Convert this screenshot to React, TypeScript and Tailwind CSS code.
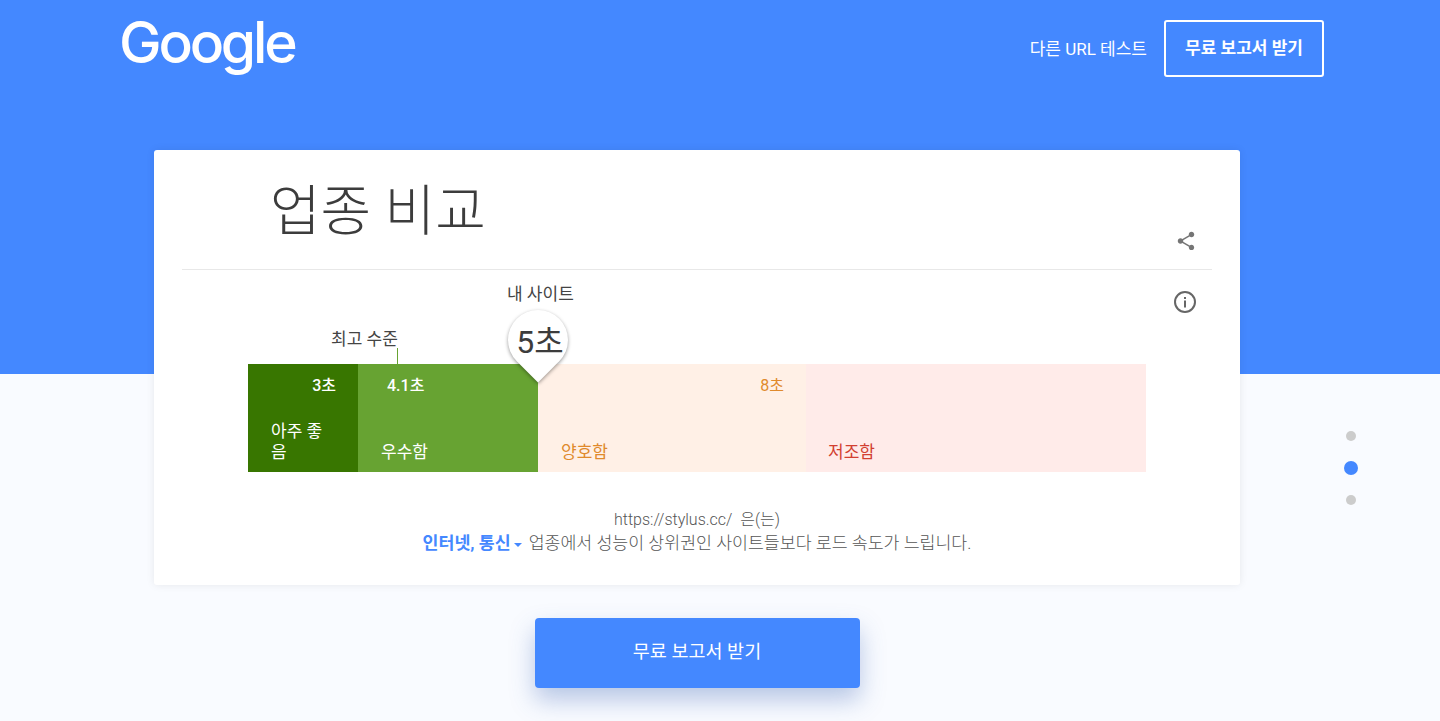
const font = "font-['Roboto','Noto_Sans_CJK_KR',sans-serif]";

function ShareIcon() {
  return (
    <svg viewBox="0 0 24 24" className="h-[22px] w-[22px] fill-[#757575]">
      <path d="M18 16.08c-.76 0-1.44.3-1.96.77L8.91 12.7c.05-.23.09-.46.09-.7s-.04-.47-.09-.7l7.05-4.11c.54.5 1.25.81 2.04.81 1.66 0 3-1.34 3-3s-1.34-3-3-3-3 1.34-3 3c0 .24.04.47.09.7L8.04 9.81C7.5 9.31 6.79 9 6 9c-1.66 0-3 1.34-3 3s1.34 3 3 3c.79 0 1.5-.31 2.04-.81l7.12 4.16c-.05.21-.08.43-.08.65 0 1.61 1.31 2.92 2.92 2.92 1.61 0 2.92-1.31 2.92-2.92s-1.31-2.92-2.92-2.92z" />
    </svg>
  );
}

function InfoIcon() {
  return (
    <svg viewBox="0 0 22 22" className="h-[22px] w-[22px]">
      <circle cx="11" cy="11" r="10" fill="none" stroke="#666" strokeWidth="2" />
      <rect x="10" y="9.5" width="2" height="7" fill="#666" />
      <rect x="10" y="6" width="2" height="2" fill="#666" />
    </svg>
  );
}

function Chart() {
  return (
    <div className="relative mx-[94px] flex h-[108px] text-[17px] leading-[21px]">
      <div className="flex w-[110px] flex-col justify-between bg-[#387600] pt-[10px] pb-[9px] text-white">
        <p className="pr-[22px] text-right text-base font-medium">3초</p>
        <p className="w-[84px] pl-[23px]">아주 좋음</p>
      </div>
      <div className="flex w-[180px] flex-col justify-between bg-[#67a332] pt-[10px] pb-[9px] text-white">
        <p className="pl-[29px] text-base font-medium">4.1초</p>
        <p className="pl-[23px]">우수함</p>
      </div>
      <div className="flex w-[268px] flex-col justify-between bg-[#fff0e6] pt-[10px] pb-[9px] text-[#e08a2c]">
        <p className="pr-[22px] text-right text-base">8초</p>
        <p className="pl-[23px]">양호함</p>
      </div>
      <div className="flex w-[340px] flex-col justify-end bg-[#ffebe9] pt-[10px] pb-[9px] text-[#d23f31]">
        <p className="pl-[22px]">저조함</p>
      </div>

      <div className="absolute bottom-full left-[83px] flex flex-col items-end text-[#444]">
        <span className="mb-[-2px] leading-[21px] whitespace-nowrap">최고 수준</span>
        <span className="relative h-[16px] w-px bg-[#67a332]" />
      </div>

      <span className="absolute top-[-80px] left-[259px] leading-[21px] whitespace-nowrap text-[#444]">
        내 사이트
      </span>
      <div className="absolute top-[-54px] left-[260px] h-[60px] w-[60px] rotate-45 rounded-[50%_50%_0_50%] bg-white shadow-[1px_1px_4px_rgba(0,0,0,0.4)]" />
      <span className="absolute top-[-42px] left-[262px] w-[60px] text-center text-[32px] leading-[40px] text-[#3c3c3c]">
        5초
      </span>
    </div>
  );
}

export default function App() {
  return (
    <div className={`${font} relative h-[721px] overflow-hidden bg-[#f9fbff]`}>
      <header className="flex h-[374px] items-start justify-between bg-[#4488ff] pt-[20px] pr-[116px] pl-[119px]">
        <span className="mt-[-23px] font-['Inter',sans-serif] text-[57px] leading-[92px] font-medium tracking-[-3.2px] text-white">
          Google
        </span>
        <div className="flex items-center gap-[17px] text-white">
          <span className="mt-[2px] text-[17px]">다른 URL 테스트</span>
          <button className="flex h-[57px] w-[160px] items-center justify-center rounded-[3px] border-2 border-white pt-px text-[17px] font-bold">
            무료 보고서 받기
          </button>
        </div>
      </header>

      <main className="mt-[-224px] ml-[154px] flex w-[1086px] flex-col items-center">
        <section className="h-[435px] w-full rounded-[3px] bg-white shadow-[0_0_8px_rgba(0,0,0,0.08)]">
          <div className="relative mx-[28px] h-[120px] border-b border-[#e8e8e8] pt-[24px] pl-[88px]">
            <h1 className="text-[55px] leading-[74px] font-light text-[#3c3c3c]">업종 비교</h1>
            <div className="absolute right-[15px] bottom-[17px]">
              <ShareIcon />
            </div>
          </div>
          <div className="relative pt-[94px]">
            <div className="absolute top-[21px] right-[44px]">
              <InfoIcon />
            </div>
            <Chart />
            <div className="mt-[36px] text-center text-[17.3px] leading-[23px] font-light text-[#555]">
              <p className="text-base">https://stylus.cc/&nbsp; 은(는)</p>
              <p className="flex items-center justify-center">
                <span className="font-bold text-[#4488ff]">인터넷, 통신</span>
                <span className="mt-[3px] ml-[3px] h-0 w-0 border-x-[4px] border-t-[4px] border-x-transparent border-t-[#4488ff]" />
                <span className="ml-[7px]">업종에서 성능이 상위권인 사이트들보다 로드 속도가 느립니다.</span>
              </p>
            </div>
          </div>
        </section>
        <button className="mt-[33px] h-[70px] w-[325px] rounded-[4px] bg-[#4488ff] text-[18.5px] text-white shadow-[0_12px_24px_rgba(60,100,180,0.35)]">
          무료 보고서 받기
        </button>
      </main>

      <nav className="absolute top-[431px] left-[1344px] flex w-[14px] flex-col items-center">
        <span className="h-[10px] w-[10px] rounded-full bg-[#ccc]" />
        <span className="mt-[20px] h-[14px] w-[14px] rounded-full bg-[#4488ff]" />
        <span className="mt-[20px] h-[10px] w-[10px] rounded-full bg-[#ccc]" />
      </nav>
    </div>
  );
}
